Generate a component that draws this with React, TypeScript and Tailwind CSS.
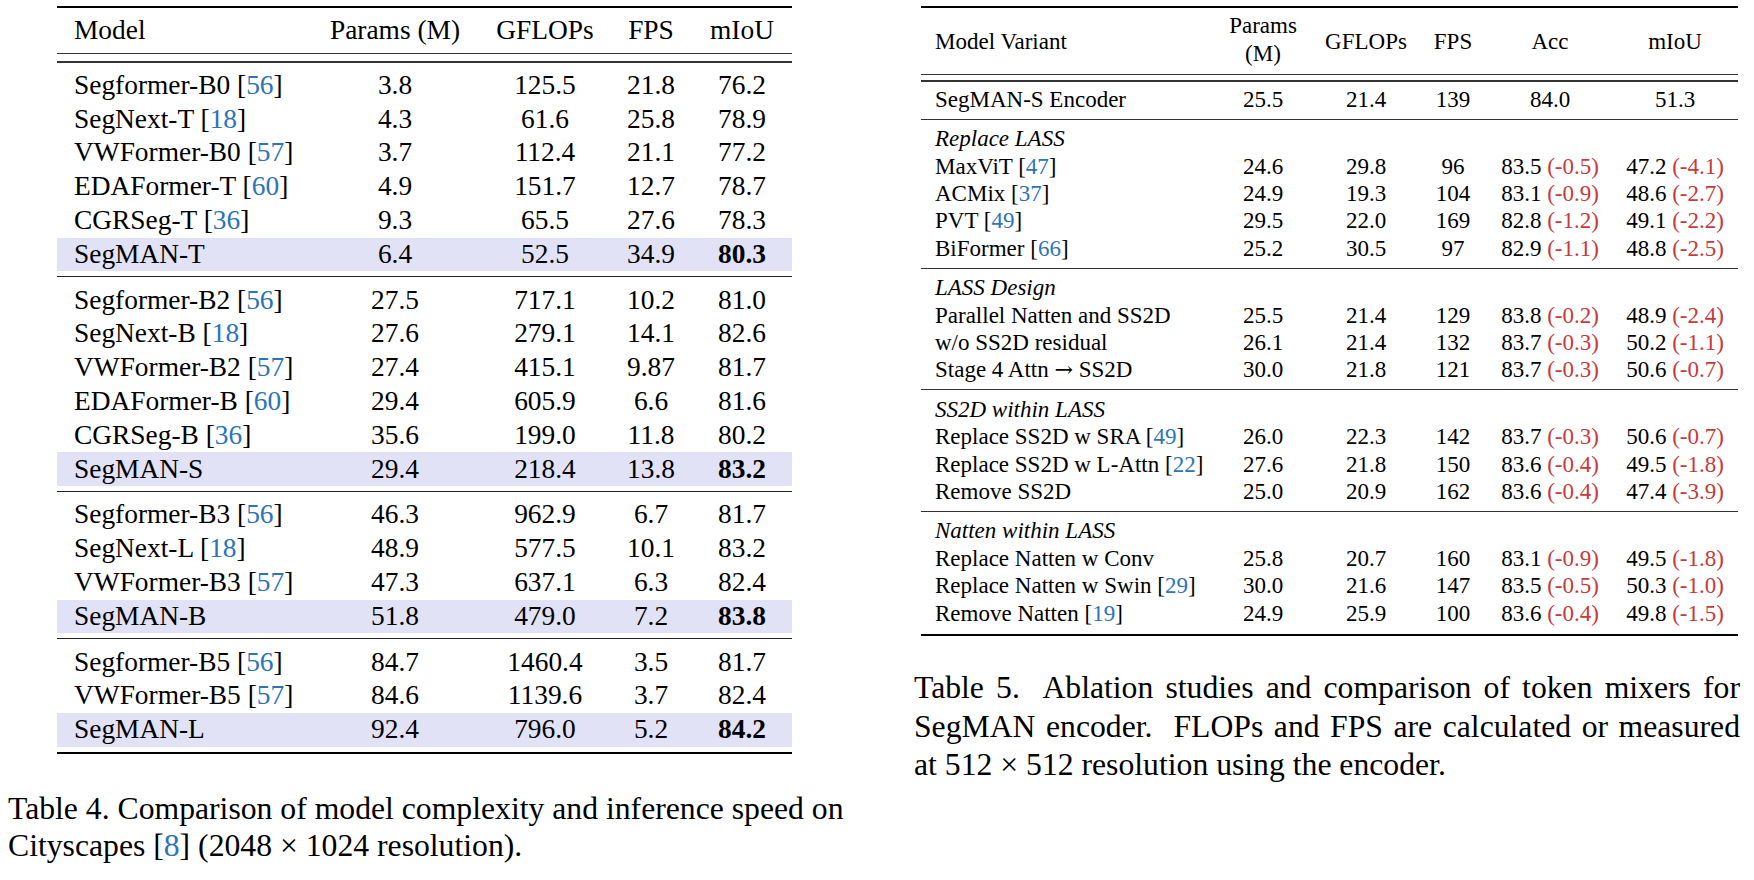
import React from 'react';

type Row4 = { name: string; cite?: string; params: string; gflops: string; fps: string; miou: string; ours?: boolean };

const groups4: Row4[][] = [
  [
    { name: 'Segformer-B0', cite: '56', params: '3.8', gflops: '125.5', fps: '21.8', miou: '76.2' },
    { name: 'SegNext-T', cite: '18', params: '4.3', gflops: '61.6', fps: '25.8', miou: '78.9' },
    { name: 'VWFormer-B0', cite: '57', params: '3.7', gflops: '112.4', fps: '21.1', miou: '77.2' },
    { name: 'EDAFormer-T', cite: '60', params: '4.9', gflops: '151.7', fps: '12.7', miou: '78.7' },
    { name: 'CGRSeg-T', cite: '36', params: '9.3', gflops: '65.5', fps: '27.6', miou: '78.3' },
    { name: 'SegMAN-T', params: '6.4', gflops: '52.5', fps: '34.9', miou: '80.3', ours: true },
  ],
  [
    { name: 'Segformer-B2', cite: '56', params: '27.5', gflops: '717.1', fps: '10.2', miou: '81.0' },
    { name: 'SegNext-B', cite: '18', params: '27.6', gflops: '279.1', fps: '14.1', miou: '82.6' },
    { name: 'VWFormer-B2', cite: '57', params: '27.4', gflops: '415.1', fps: '9.87', miou: '81.7' },
    { name: 'EDAFormer-B', cite: '60', params: '29.4', gflops: '605.9', fps: '6.6', miou: '81.6' },
    { name: 'CGRSeg-B', cite: '36', params: '35.6', gflops: '199.0', fps: '11.8', miou: '80.2' },
    { name: 'SegMAN-S', params: '29.4', gflops: '218.4', fps: '13.8', miou: '83.2', ours: true },
  ],
  [
    { name: 'Segformer-B3', cite: '56', params: '46.3', gflops: '962.9', fps: '6.7', miou: '81.7' },
    { name: 'SegNext-L', cite: '18', params: '48.9', gflops: '577.5', fps: '10.1', miou: '83.2' },
    { name: 'VWFormer-B3', cite: '57', params: '47.3', gflops: '637.1', fps: '6.3', miou: '82.4' },
    { name: 'SegMAN-B', params: '51.8', gflops: '479.0', fps: '7.2', miou: '83.8', ours: true },
  ],
  [
    { name: 'Segformer-B5', cite: '56', params: '84.7', gflops: '1460.4', fps: '3.5', miou: '81.7' },
    { name: 'VWFormer-B5', cite: '57', params: '84.6', gflops: '1139.6', fps: '3.7', miou: '82.4' },
    { name: 'SegMAN-L', params: '92.4', gflops: '796.0', fps: '5.2', miou: '84.2', ours: true },
  ],
];

type Row5 = { name: string; cite?: string; params: string; gflops: string; fps: string; acc: string; accD: string; miou: string; miouD: string };

const groups5: { title: string; rows: Row5[] }[] = [
  {
    title: 'Replace LASS',
    rows: [
      { name: 'MaxViT', cite: '47', params: '24.6', gflops: '29.8', fps: '96', acc: '83.5', accD: '(-0.5)', miou: '47.2', miouD: '(-4.1)' },
      { name: 'ACMix', cite: '37', params: '24.9', gflops: '19.3', fps: '104', acc: '83.1', accD: '(-0.9)', miou: '48.6', miouD: '(-2.7)' },
      { name: 'PVT', cite: '49', params: '29.5', gflops: '22.0', fps: '169', acc: '82.8', accD: '(-1.2)', miou: '49.1', miouD: '(-2.2)' },
      { name: 'BiFormer', cite: '66', params: '25.2', gflops: '30.5', fps: '97', acc: '82.9', accD: '(-1.1)', miou: '48.8', miouD: '(-2.5)' },
    ],
  },
  {
    title: 'LASS Design',
    rows: [
      { name: 'Parallel Natten and SS2D', params: '25.5', gflops: '21.4', fps: '129', acc: '83.8', accD: '(-0.2)', miou: '48.9', miouD: '(-2.4)' },
      { name: 'w/o SS2D residual', params: '26.1', gflops: '21.4', fps: '132', acc: '83.7', accD: '(-0.3)', miou: '50.2', miouD: '(-1.1)' },
      { name: 'Stage 4 Attn', params: '30.0', gflops: '21.8', fps: '121', acc: '83.7', accD: '(-0.3)', miou: '50.6', miouD: '(-0.7)' },
    ],
  },
  {
    title: 'SS2D within LASS',
    rows: [
      { name: 'Replace SS2D w SRA', cite: '49', params: '26.0', gflops: '22.3', fps: '142', acc: '83.7', accD: '(-0.3)', miou: '50.6', miouD: '(-0.7)' },
      { name: 'Replace SS2D w L-Attn', cite: '22', params: '27.6', gflops: '21.8', fps: '150', acc: '83.6', accD: '(-0.4)', miou: '49.5', miouD: '(-1.8)' },
      { name: 'Remove SS2D', params: '25.0', gflops: '20.9', fps: '162', acc: '83.6', accD: '(-0.4)', miou: '47.4', miouD: '(-3.9)' },
    ],
  },
  {
    title: 'Natten within LASS',
    rows: [
      { name: 'Replace Natten w Conv', params: '25.8', gflops: '20.7', fps: '160', acc: '83.1', accD: '(-0.9)', miou: '49.5', miouD: '(-1.8)' },
      { name: 'Replace Natten w Swin', cite: '29', params: '30.0', gflops: '21.6', fps: '147', acc: '83.5', accD: '(-0.5)', miou: '50.3', miouD: '(-1.0)' },
      { name: 'Remove Natten', cite: '19', params: '24.9', gflops: '25.9', fps: '100', acc: '83.6', accD: '(-0.4)', miou: '49.8', miouD: '(-1.5)' },
    ],
  },
];

function Cite({ n }: { n?: string }) {
  if (!n) return null;
  return (
    <>
      {' '}[<span className="text-[#2c74b8]">{n}</span>]
    </>
  );
}

const cols4 = 'grid grid-cols-[253px_170px_130px_82px_100px] items-center';
const cols5 = 'grid grid-cols-[291px_102px_104px_70px_124px_126px] items-center';

function Table4() {
  return (
    <div className="mt-[6px] ml-[49px] w-[735px] text-[27.4px] leading-none">
      <div className="h-[2px] bg-black" />
      <div className={`${cols4} h-[45px] text-center`}>
        <div className="text-left pl-[17px]">Model</div>
        <div>Params (M)</div>
        <div>GFLOPs</div>
        <div>FPS</div>
        <div>mIoU</div>
      </div>
      <div className="h-[1.3px] bg-[#333]" />
      <div className="h-[7px]" />
      <div className="h-[1.3px] bg-[#333]" />
      {groups4.map((g, gi) => (
        <div
          key={gi}
          className={`pt-[6px] pb-[5px] ${gi < groups4.length - 1 ? 'border-b border-[#222]' : 'border-b-[2.5px] border-black'}`}
        >
          {g.map((r) => (
            <div key={r.name} className={`${cols4} h-[33.8px] text-center ${r.ours ? 'bg-[#e2e2f7]' : ''}`}>
              <div className="text-left pl-[17px] whitespace-nowrap">
                {r.name}
                <Cite n={r.cite} />
              </div>
              <div>{r.params}</div>
              <div>{r.gflops}</div>
              <div>{r.fps}</div>
              <div className={r.ours ? 'font-bold' : ''}>{r.miou}</div>
            </div>
          ))}
        </div>
      ))}
      <div className="mt-[36px] -ml-[49px] w-[860px] text-[31.7px] leading-[37px]">
        Table 4. Comparison of model complexity and inference speed on
        <br />
        Cityscapes [<span className="text-[#2c74b8]">8</span>] (2048 × 1024 resolution).
      </div>
    </div>
  );
}

function Delta({ v, d }: { v: string; d: string }) {
  return (
    <span className="whitespace-nowrap">
      {v} <span className="text-[#c8393b]">{d}</span>
    </span>
  );
}

function Table5() {
  return (
    <div className="mt-[6px] ml-[7px] w-[817px] text-[23px] leading-none">
      <div className="h-[2px] bg-black" />
      <div className={`${cols5} h-[66px] text-center`}>
        <div className="text-left pl-[14px]">Model Variant</div>
        <div className="leading-[28px] -mt-[2px]">
          Params
          <br />
          (M)
        </div>
        <div>GFLOPs</div>
        <div>FPS</div>
        <div>Acc</div>
        <div>mIoU</div>
      </div>
      <div className="h-[1.3px] bg-[#333]" />
      <div className="h-[5px]" />
      <div className="h-[1.3px] bg-[#333]" />
      <div className="pt-[4px] pb-[5.5px] border-b border-[#333]">
        <div className={`${cols5} h-[27.5px] text-center`}>
          <div className="text-left pl-[14px]">SegMAN-S Encoder</div>
          <div>25.5</div>
          <div>21.4</div>
          <div>139</div>
          <div>84.0</div>
          <div>51.3</div>
        </div>
      </div>
      {groups5.map((g, gi) => (
        <div
          key={g.title}
          className={`pt-[5.5px] ${gi < groups5.length - 1 ? 'pb-[5.5px] border-b border-[#333]' : 'pb-[7.5px] border-b-2 border-black'}`}
        >
          <div className="h-[27.4px] flex items-center pl-[14px] italic">{g.title}</div>
          {g.rows.map((r) => (
            <div key={r.name} className={`${cols5} h-[27.4px] text-center`}>
              <div className="text-left pl-[14px] whitespace-nowrap">
                {r.name}
                {r.name === 'Stage 4 Attn' && (
                  <>
                    {' '}
                    <span className="font-['DejaVu_Serif',serif] text-[22px]">→</span> SS2D
                  </>
                )}
                <Cite n={r.cite} />
              </div>
              <div>{r.params}</div>
              <div>{r.gflops}</div>
              <div>{r.fps}</div>
              <div>
                <Delta v={r.acc} d={r.accD} />
              </div>
              <div>
                <Delta v={r.miou} d={r.miouD} />
              </div>
            </div>
          ))}
        </div>
      ))}
      <div className="mt-[33px] -ml-[7px] w-[826px] text-[31.7px] leading-[38.5px]">
        <div className="text-justify [text-align-last:justify]">Table 5.&nbsp; Ablation studies and comparison of token mixers for</div>
        <div className="text-justify [text-align-last:justify]">SegMAN encoder.&nbsp; FLOPs and FPS are calculated or measured</div>
        <div>at 512 × 512 resolution using the encoder.</div>
      </div>
    </div>
  );
}

export default function App() {
  return (
    <div className="w-[1754px] h-[880px] bg-white text-black overflow-hidden flex font-['Liberation_Serif','Times_New_Roman',serif]">
      <div className="w-[906px] pl-[8px]">
        <Table4 />
      </div>
      <div className="pl-[8px]">
        <Table5 />
      </div>
    </div>
  );
}
